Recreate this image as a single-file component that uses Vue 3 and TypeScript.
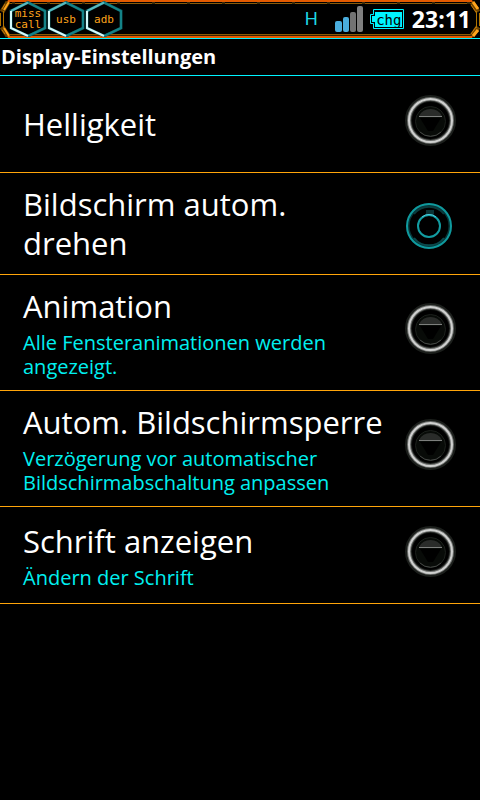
<script setup lang="ts">
import { ref } from 'vue'

interface Badge {
  id: string
  lines: string[]
}

interface Setting {
  id: string
  title: string
  summary?: string
  kind: 'dialog' | 'toggle'
}

const badges: Badge[] = [
  { id: 'missed', lines: ['miss', 'call'] },
  { id: 'usb', lines: ['usb'] },
  { id: 'adb', lines: ['adb'] },
]

const settings: Setting[] = [
  { id: 'brightness', title: 'Helligkeit', kind: 'dialog' },
  { id: 'rotate', title: 'Bildschirm autom. drehen', kind: 'toggle' },
  { id: 'animation', title: 'Animation', summary: 'Alle Fensteranimationen werden angezeigt.', kind: 'dialog' },
  { id: 'timeout', title: 'Autom. Bildschirmsperre', summary: 'Verzögerung vor automatischer Bildschirmabschaltung anpassen', kind: 'dialog' },
  { id: 'font', title: 'Schrift anzeigen', summary: 'Ändern der Schrift', kind: 'dialog' },
]

const autoRotate = ref(false)
</script>

<template>
  <div class="screen">
    <header class="status">
      <svg class="corner" width="14" height="38" viewBox="0 0 14 38" aria-hidden="true">
        <path d="M0 0 H8 L2 11 V28 L8 38 H0 Z" fill="#000" />
        <path d="M8 2 L2 12 M2 27 L8 36" stroke="#6b4300" stroke-width="5" />
        <path d="M9 2 L4 10 M4 28 L9 36" stroke="#ffa41c" stroke-width="2" />
        <path d="M5 4 L2 9 M2 30 L5 34" stroke="#c87808" stroke-width="1" />
        <path d="M0.500 13V26M3.500 11V28" stroke="#b07400" />
      </svg>
      <div class="badges">
        <div v-for="b in badges" :key="b.id" class="badge">
          <svg class="hex" width="38" height="36" viewBox="0 0 38 36" aria-hidden="true">
            <path d="M19 1.500 L36 10 V27 L19 35 L2 27 V10 Z" fill="#000" stroke="#0c5256" stroke-width="3" />
            <path d="M19 1.500 L36 10 V27 L19 35" fill="none" stroke="#148388" stroke-width="2" />
            <path d="M19 1.500 L2 10" fill="none" stroke="#56b9bf" stroke-width="2" />
            <path d="M2 10 V27 L19 35" fill="none" stroke="#d5fbfd" stroke-width="2" />
          </svg>
          <span class="badge-text"><span v-for="l in b.lines" :key="l">{{ l }}</span></span>
        </div>
      </div>
      <div class="indicators">
        <span class="network">H</span>
        <svg class="signal" width="29" height="26" viewBox="0 0 29 26" aria-hidden="true">
          <rect x="0" y="15" width="7" height="11" rx="2" fill="#4aaede" />
          <rect x="8" y="11" width="6" height="15" rx="2" fill="#4aaede" />
          <rect x="15" y="6" width="6" height="20" rx="2" fill="#737373" />
          <rect x="22" y="0" width="6" height="26" rx="2" fill="#808080" />
        </svg>
        <span class="battery">
          <svg width="34" height="20" viewBox="0 0 34 20" aria-hidden="true">
            <path d="M3.500 0.500 H33.500 V19.500 H3.500 V14.500 H0.500 V5.500 H3.500 Z" fill="#000" stroke="#00f4ff" />
            <path d="M5 3 H32 V18 H5 V13 H2 V7 H5 Z" fill="#00f4ff" />
          </svg>
          <span class="battery-text">chg</span>
        </span>
        <time class="clock">23:11</time>
      </div>
      <svg class="corner" width="14" height="38" viewBox="0 0 14 38" aria-hidden="true">
        <path d="M6 0 H14 V38 H6 L12 28 V11 Z" fill="#000" />
        <path d="M6 2 L12 12 M12 27 L6 36" stroke="#6b4300" stroke-width="5" />
        <path d="M7 2 L12 9 M12 30 L7 36" stroke="#ffa41c" stroke-width="3" />
        <path d="M5 5 L10 12 M10 27 L5 34" stroke="#c87808" stroke-width="1" />
        <path d="M13.500 13V26M10.500 11V28" stroke="#b07400" />
      </svg>
    </header>

    <h1 class="heading">Display-Einstellungen</h1>

    <main class="list">
      <template v-for="s in settings" :key="s.id">
        <label v-if="s.kind === 'toggle'" class="row">
          <span class="text"><span class="title">{{ s.title }}</span></span>
          <span class="widget">
            <input v-model="autoRotate" class="toggle" type="checkbox" />
            <svg width="62" height="62" viewBox="0 0 62 62" aria-hidden="true">
              <circle cx="29" cy="33" r="21" fill="none" stroke="#083638" stroke-width="3" />
              <circle cx="29" cy="33" r="22" fill="none" stroke="#0f9a9e" stroke-width="2" />
              <path d="M14 21 A19 19 0 0 1 44 21" fill="none" stroke="#0a3c3e" stroke-width="2" />
              <path d="M14 45 A19 19 0 0 0 44 45" fill="none" stroke="#0a4a4c" stroke-width="2" />
              <path d="M26 17 H34 V22 H26 Z" fill="#0a3335" />
              <circle cx="29" cy="33" r="11" fill="none" stroke="#129ca1" stroke-width="2" />
              <path d="M22 24 A11 11 0 0 1 36 24" fill="none" stroke="#4fc9dc" stroke-width="1" />
              <circle v-if="autoRotate" cx="29" cy="33" r="7" fill="#00f4ff" />
            </svg>
          </span>
        </label>
        <button v-else class="row" type="button">
          <span class="text">
            <span class="title">{{ s.title }}</span>
            <span v-if="s.summary" class="summary">{{ s.summary }}</span>
          </span>
          <span class="widget">
            <svg width="62" height="62" viewBox="0 0 62 62" aria-hidden="true">
              <circle cx="30.500" cy="26.500" r="22" fill="none" stroke="#1c1f1c" stroke-width="7" />
              <circle cx="30.500" cy="26.500" r="21.500" fill="none" stroke="#6c6e6c" stroke-width="4" />
              <circle cx="30.500" cy="26.500" r="21.500" fill="none" stroke="#cfd0cf" stroke-width="2" />
              <circle cx="30.500" cy="27.500" r="15" fill="#080b08" stroke="#1c201c" stroke-width="1" />
              <path d="M19 22 A13 13 0 0 1 42 22 Z" fill="#2a2c2a" />
              <path d="M20 24 H41 L33 37 H28 Z" fill="#000" />
              <path d="M19 22.500 H42" stroke="#7d7f7d" />
              <path d="M20 38 A15 15 0 0 0 41 38" fill="none" stroke="#444744" />
            </svg>
          </span>
        </button>
      </template>
    </main>
  </div>
</template>

<style>
body {
  margin: 0;
  background: #000;
}
</style>

<style scoped>
.screen {
  min-height: 100vh;
  background: #000;
  color: #fff;
  font-family: "Open Sans", "Noto Sans", sans-serif;
}

.status {
  display: flex;
  box-sizing: border-box;
  height: 39px;
  border-bottom: 1px solid #00f4ff;
  background:
    repeating-linear-gradient(90deg, transparent 0 12px, #3a2a08 12px 15px, transparent 15px 35px) 0 2px / 100% 2px no-repeat,
    linear-gradient(#e35a00 0 2px, #000 2px 3px, #8a5a08 3px 4px, #000 4px 34px, #8a5a08 34px 35px, #3a2200 35px 36px, #e35a00 36px 38px);
}

.corner {
  flex: none;
}

.badges {
  display: flex;
  flex: 1;
  margin-left: -5px;
}

.badge {
  display: grid;
  place-items: center;
  width: 38px;
  height: 38px;
}

.hex,
.badge-text {
  grid-area: 1 / 1;
}

.badge-text {
  display: flex;
  flex-direction: column;
  color: #ffa41c;
  font: 11px/11px "DejaVu Sans Mono", monospace;
}

.indicators {
  display: flex;
  align-items: center;
  margin-right: -5px;
}

.network {
  margin-right: 17px;
  color: #1fd8e4;
  font: 18px/20px "Liberation Sans", sans-serif;
}

.signal {
  margin-right: 6px;
}

.battery {
  display: grid;
  place-items: center;
  margin-right: 8px;
}

.battery > * {
  grid-area: 1 / 1;
}

.battery-text {
  padding: 2px 0 0 4px;
  color: #000;
  font: 14px/16px "DejaVu Sans Mono", monospace;
}

.clock {
  font-size: 23px;
  font-weight: 700;
  line-height: 38px;
}

.heading {
  margin: 0;
  padding: 0 1px;
  border-bottom: 1px solid #00f4ff;
  font-size: 20px;
  font-weight: 700;
  line-height: 36px;
}

.list {
  display: flex;
  flex-direction: column;
}

.row {
  display: flex;
  align-items: center;
  box-sizing: border-box;
  width: 100%;
  min-height: 97px;
  margin: 0;
  padding: 12px 18px 11px 23px;
  border: 0;
  border-bottom: 1px solid #ffa50a;
  background: none;
  color: inherit;
  font: inherit;
  text-align: left;
  cursor: pointer;
}

.row:focus-visible,
.row:focus-within {
  background: #0a1a1c;
}

.text {
  display: flex;
  flex: 1;
  flex-direction: column;
  gap: 5px;
  min-width: 0;
}

.title {
  font-size: 31px;
  line-height: 39px;
}

.summary {
  color: #00f0f0;
  font-size: 20px;
  line-height: 24px;
}

.widget {
  display: grid;
  flex: none;
  margin-left: 4px;
}

.widget > * {
  grid-area: 1 / 1;
}

.toggle {
  width: 62px;
  height: 62px;
  margin: 0;
  opacity: 0;
}
</style>
